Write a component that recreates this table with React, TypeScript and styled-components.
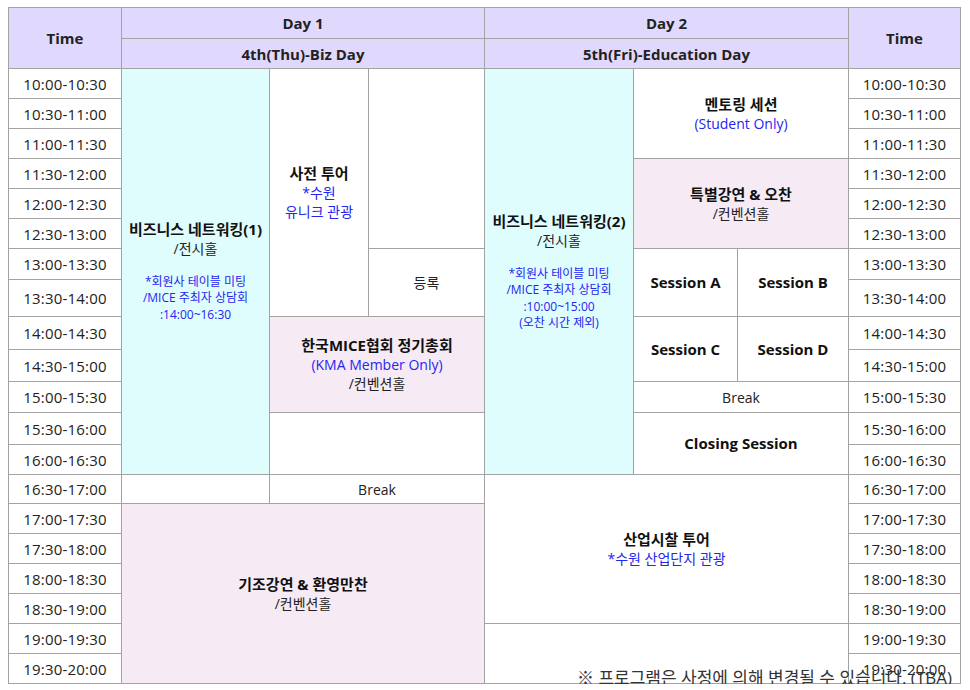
import styled, { createGlobalStyle } from 'styled-components';

const GlobalStyle = createGlobalStyle`
  html, body {
    margin: 0;
    padding: 0;
    background: #ffffff;
    overflow: hidden;
  }
  body {
    font-family: "Open Sans", "Noto Sans CJK KR", sans-serif;
    color: #222222;
  }
`;

const Page = styled.div`
  position: relative;
  width: 953px;
  margin: 7px 8px 0;
`;

const Schedule = styled.div`
  display: grid;
  grid-template-columns: 112px 147px 98px 115px 148px 103px 110px 111px;
  grid-template-rows:
    30px 29px
    29px 29px 29px 29px 29px 29px 30px 36px 32px 31px
    30px 31px 29px 28px 29px 29px 29px 29px 29px 29px;
  gap: 1px;
  padding: 1px;
  background: #a3a3a3;
`;

type Place = { $col: string; $row: string };

const HeadCell = styled.div<Place>`
  grid-column: ${(p) => p.$col};
  grid-row: ${(p) => p.$row};
  display: flex;
  align-items: center;
  justify-content: center;
  background: #e1d9fd;
  font-weight: 700;
  font-size: 15px;
`;

const TimeCell = styled.div<Place>`
  grid-column: ${(p) => p.$col};
  grid-row: ${(p) => p.$row};
  display: flex;
  align-items: center;
  justify-content: center;
  background: #ffffff;
  font-size: 15px;
  letter-spacing: 0.2px;
`;

const tones = {
  white: '#ffffff',
  cyan: '#e0fdfe',
  pink: '#f6ebf5',
};

const Slot = styled.div<Place & { $tone?: keyof typeof tones }>`
  grid-column: ${(p) => p.$col};
  grid-row: ${(p) => p.$row};
  display: flex;
  flex-direction: column;
  align-items: center;
  justify-content: center;
  text-align: center;
  background: ${(p) => tones[p.$tone ?? 'white']};
  font-size: 14px;
  line-height: 19px;
`;

const Title = styled.div`
  font-weight: 700;
  font-size: 15px;
  color: #111111;
`;

const Room = styled.div`
  font-size: 14px;
`;

const Blue = styled.div`
  color: #2525f0;
  font-size: 14px;
`;

const BlueSmall = styled.div`
  margin-top: 16px;
  color: #2525f0;
  font-size: 12px;
  line-height: 16.5px;
`;

const Plain = styled.div`
  font-size: 14px;
`;

const Footnote = styled.div`
  position: absolute;
  right: 9px;
  bottom: -5px;
  font-size: 17px;
  color: #333333;
  white-space: nowrap;
`;

const times = [
  '10:00-10:30', '10:30-11:00', '11:00-11:30', '11:30-12:00', '12:00-12:30',
  '12:30-13:00', '13:00-13:30', '13:30-14:00', '14:00-14:30', '14:30-15:00',
  '15:00-15:30', '15:30-16:00', '16:00-16:30', '16:30-17:00', '17:00-17:30',
  '17:30-18:00', '18:00-18:30', '18:30-19:00', '19:00-19:30', '19:30-20:00',
];

export default function App() {
  return (
    <>
      <GlobalStyle />
      <Page>
        <Schedule>
          <HeadCell $col="1" $row="1 / 3">Time</HeadCell>
          <HeadCell $col="2 / 5" $row="1">Day 1</HeadCell>
          <HeadCell $col="5 / 8" $row="1">Day 2</HeadCell>
          <HeadCell $col="8" $row="1 / 3">Time</HeadCell>
          <HeadCell $col="2 / 5" $row="2">4th(Thu)-Biz Day</HeadCell>
          <HeadCell $col="5 / 8" $row="2">5th(Fri)-Education Day</HeadCell>

          {times.map((t, i) => (
            <TimeCell key={'l' + t} $col="1" $row={String(i + 3)}>{t}</TimeCell>
          ))}
          {times.map((t, i) => (
            <TimeCell key={'r' + t} $col="8" $row={String(i + 3)}>{t}</TimeCell>
          ))}

          {/* Day 1 */}
          <Slot $col="2" $row="3 / 16" $tone="cyan">
            <Title>비즈니스 네트워킹(1)</Title>
            <Room>/전시홀</Room>
            <BlueSmall>
              *회원사 테이블 미팅<br />/MICE 주최자 상담회<br />:14:00~16:30
            </BlueSmall>
          </Slot>
          <Slot $col="3" $row="3 / 11">
            <Title>사전 투어</Title>
            <Blue>*수원</Blue>
            <Blue>유니크 관광</Blue>
          </Slot>
          <Slot $col="4" $row="3 / 9" />
          <Slot $col="4" $row="9 / 11">
            <Plain>등록</Plain>
          </Slot>
          <Slot $col="3 / 5" $row="11 / 14" $tone="pink">
            <Title>한국MICE협회 정기총회</Title>
            <Blue>(KMA Member Only)</Blue>
            <Room>/컨벤션홀</Room>
          </Slot>
          <Slot $col="3 / 5" $row="14 / 16" />
          <Slot $col="2" $row="16" />
          <Slot $col="3 / 5" $row="16">
            <Plain>Break</Plain>
          </Slot>
          <Slot $col="2 / 5" $row="17 / 23" $tone="pink">
            <Title>기조강연 &amp; 환영만찬</Title>
            <Room>/컨벤션홀</Room>
          </Slot>

          {/* Day 2 */}
          <Slot $col="5" $row="3 / 16" $tone="cyan">
            <Title>비즈니스 네트워킹(2)</Title>
            <Room>/전시홀</Room>
            <BlueSmall>
              *회원사 테이블 미팅<br />/MICE 주최자 상담회<br />:10:00~15:00<br />(오찬 시간 제외)
            </BlueSmall>
          </Slot>
          <Slot $col="6 / 8" $row="3 / 6">
            <Title>멘토링 세션</Title>
            <Blue>(Student Only)</Blue>
          </Slot>
          <Slot $col="6 / 8" $row="6 / 9" $tone="pink">
            <Title>특별강연 &amp; 오찬</Title>
            <Room>/컨벤션홀</Room>
          </Slot>
          <Slot $col="6" $row="9 / 11"><Title>Session A</Title></Slot>
          <Slot $col="7" $row="9 / 11"><Title>Session B</Title></Slot>
          <Slot $col="6" $row="11 / 13"><Title>Session C</Title></Slot>
          <Slot $col="7" $row="11 / 13"><Title>Session D</Title></Slot>
          <Slot $col="6 / 8" $row="13">
            <Plain>Break</Plain>
          </Slot>
          <Slot $col="6 / 8" $row="14 / 16">
            <Title>Closing Session</Title>
          </Slot>
          <Slot $col="5 / 8" $row="16 / 21">
            <Title>산업시찰 투어</Title>
            <Blue>*수원 산업단지 관광</Blue>
          </Slot>
          <Slot $col="5 / 8" $row="21 / 23" />
        </Schedule>
        <Footnote>※ 프로그램은 사정에 의해 변경될 수 있습니다. (TBA)</Footnote>
      </Page>
    </>
  );
}
